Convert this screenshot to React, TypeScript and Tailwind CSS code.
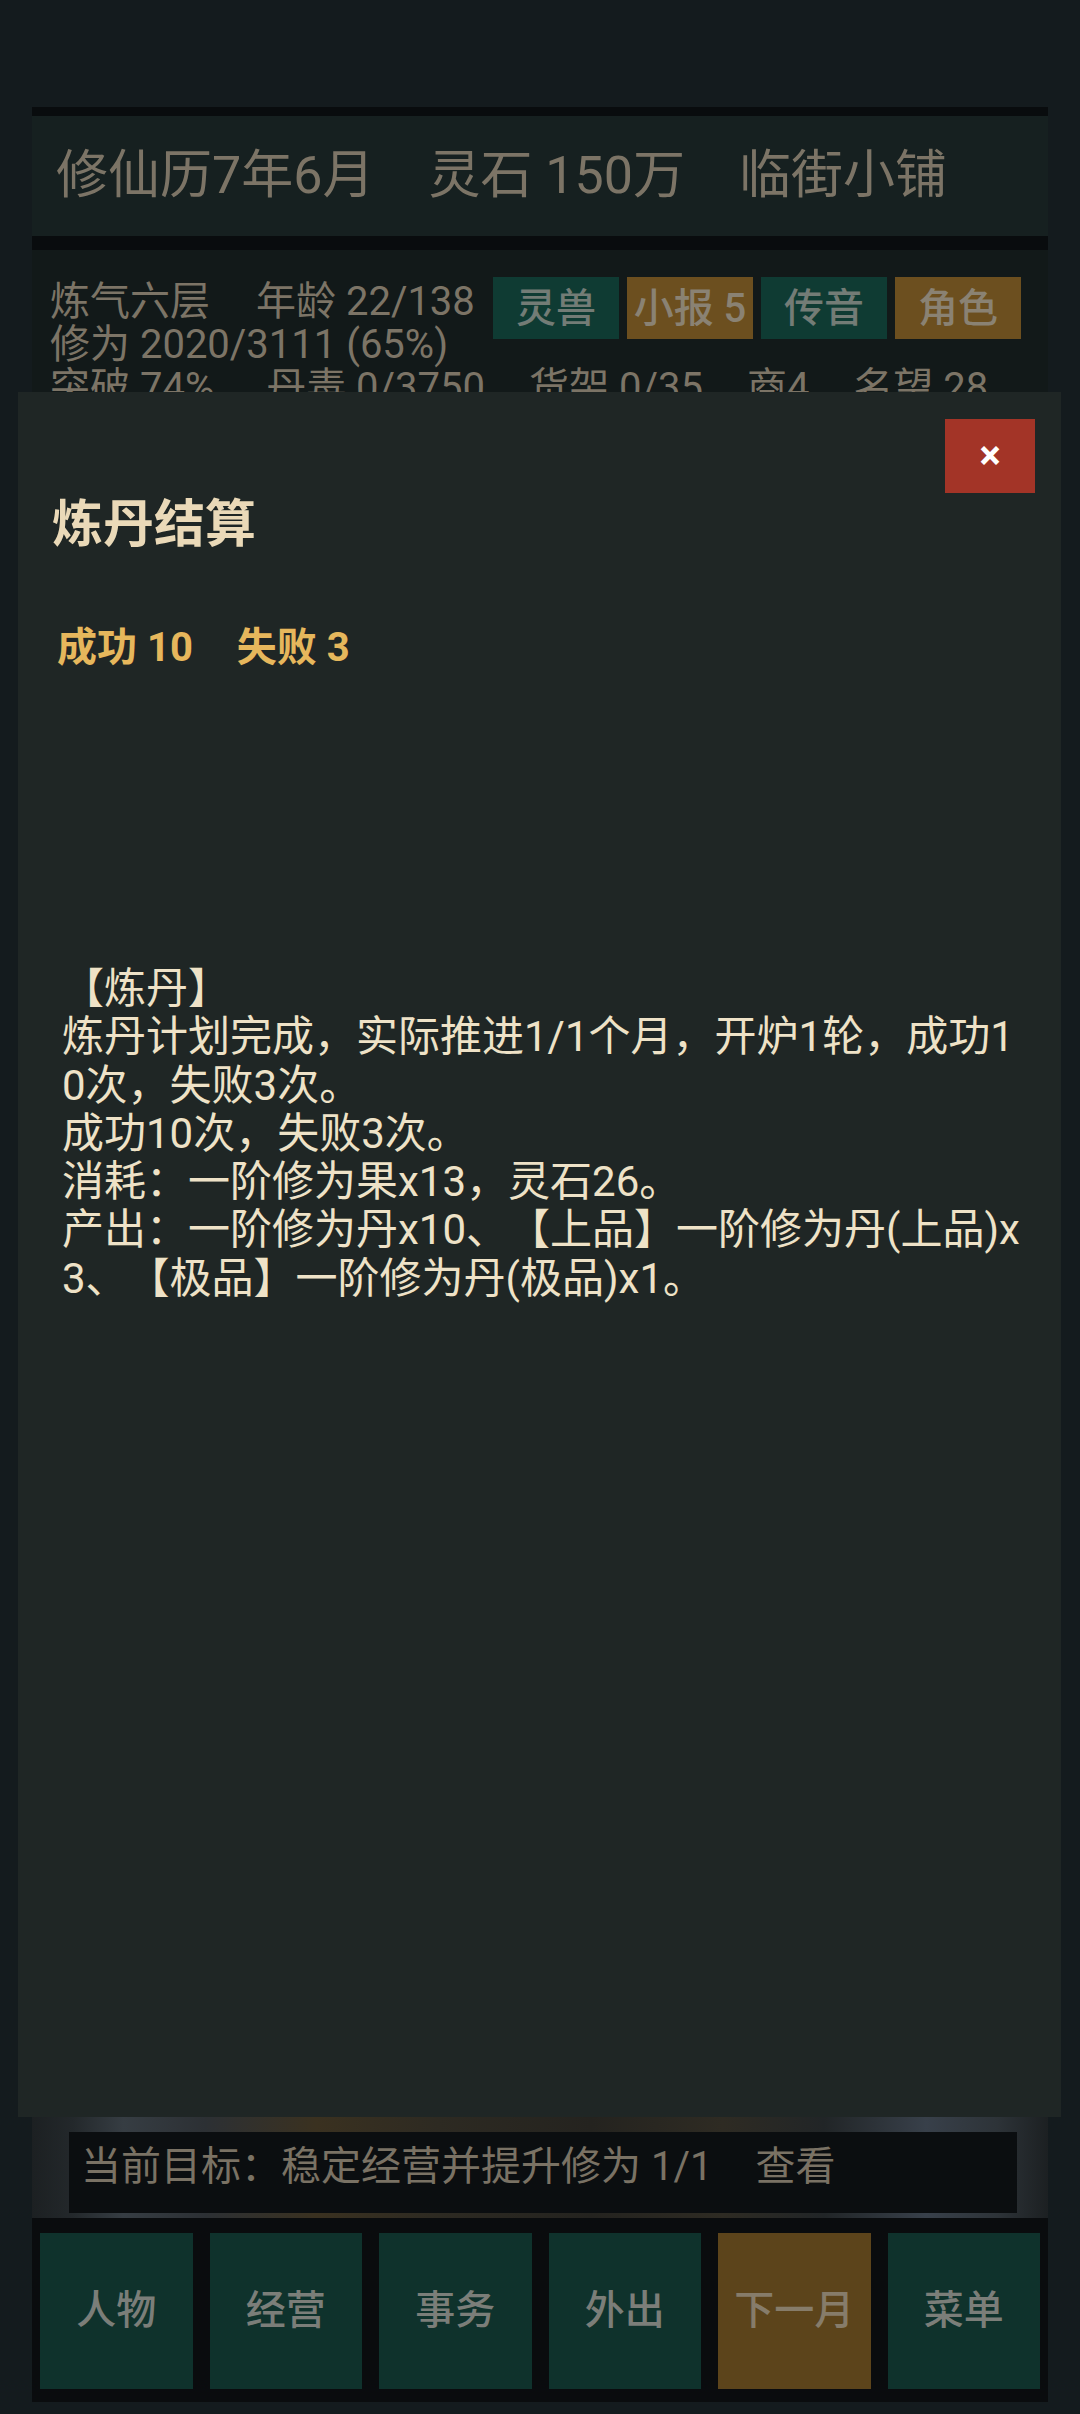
import React from 'react';

const FONT = "font-[family-name:Roboto,'Noto_Sans_CJK_SC',sans-serif]";

const TOP_BUTTONS = [
  { label: '灵兽', tone: 'green' },
  { label: '小报 5', tone: 'gold' },
  { label: '传音', tone: 'green' },
  { label: '角色', tone: 'gold' },
];

const NAV = [
  { label: '人物', tone: 'green' },
  { label: '经营', tone: 'green' },
  { label: '事务', tone: 'green' },
  { label: '外出', tone: 'green' },
  { label: '下一月', tone: 'gold' },
  { label: '菜单', tone: 'green' },
];

const REPORT = `【炼丹】
炼丹计划完成，实际推进1/1个月，开炉1轮，成功10次，失败3次。
成功10次，失败3次。
消耗：一阶修为果x13，灵石26。
产出：一阶修为丹x10、【上品】一阶修为丹(上品)x3、【极品】一阶修为丹(极品)x1。`;

export default function App() {
  return (
    <div className={`relative w-[1080px] h-[2414px] bg-[#141b1e] overflow-hidden [text-spacing-trim:space-all] ${FONT}`}>
      {/* page behind the dialog (dimmed) */}
      <div className="ml-[32px] w-[1016px] pt-[107px] h-[2402px] flex flex-col">
        <div className="h-[9px] bg-[#090c0e]" />
        <div className="h-[120px] bg-[#162020] flex items-center pl-[24px] gap-[54px] text-[52px] leading-[60px] text-[#7c7466]">
          <span>修仙历7年6月</span>
          <span>灵石 150万</span>
          <span>临街小铺</span>
        </div>
        <div className="h-[14px] bg-[#090c0e]" />

        {/* status */}
        <div className="h-[200px] bg-[#121919] pl-[18px] pr-[27px] text-[40px] leading-[43px] text-[#7c7466]">
          <div className="flex pt-[27px]">
            <div className="mt-[3px]">
              <div className="flex gap-[46px]">
                <span>炼气六层</span>
                <span>年龄 22/138</span>
              </div>
              <div>修为 2020/3111 (65%)</div>
            </div>
            <div className="ml-auto flex gap-[8px]">
              {TOP_BUTTONS.map((b) => (
                <div
                  key={b.label}
                  className={
                    b.tone === 'green'
                      ? 'w-[126px] h-[62px] flex items-center justify-center bg-[#0f3b33] text-[#737c76] font-medium'
                      : 'w-[126px] h-[62px] flex items-center justify-center bg-[#6c4f1f] text-[#8a8273] font-medium'
                  }
                >
                  {b.label}
                </div>
              ))}
            </div>
          </div>
          <div className="flex gap-[44px]">
            <span className="mr-[8px]">突破 74%</span>
            <span>丹毒 0/3750</span>
            <span>货架 0/35</span>
            <span>商4</span>
            <span>名望 28</span>
          </div>
        </div>

        {/* scene with goal bar */}
        <div className="flex-1 flex flex-col bg-[linear-gradient(90deg,#1c2022_0%,#23282b_4%,#363d43_9%,#2c3034_17%,#3a3120_28%,#2d2a22_40%,#24231f_55%,#2e2b23_68%,#212527_78%,#38404a_88%,#2d3338_95%,#1c2022_100%)]">
          <div className="mt-auto ml-[37px] mr-[31px] mb-[5px] h-[81px] bg-[#0b0e10] pl-[12px] pt-[11px] flex gap-[43px] text-[40px] leading-[48px] text-[#7a7264]">
            <span>当前目标：稳定经营并提升修为 1/1</span>
            <span>查看</span>
          </div>
        </div>

        {/* bottom nav */}
        <div className="h-[184px] bg-[#0a0c0e] px-[8px] pt-[15px] grid grid-cols-6 gap-[17px]">
          {NAV.map((n) => (
            <div
              key={n.label}
              className={
                n.tone === 'green'
                  ? 'h-[156px] flex items-center justify-center bg-[#0f322c] text-[#7b7e79] text-[40px] font-medium'
                  : 'h-[156px] flex items-center justify-center bg-[#5c441b] text-[#867c6a] text-[40px] font-medium'
              }
            >
              {n.label}
            </div>
          ))}
        </div>
      </div>

      {/* dialog */}
      <div className="absolute left-[18px] top-[392px] w-[1043px] h-[1725px] bg-[#1f2625] flex flex-col">
        <button className="self-end mt-[27px] mr-[26px] w-[90px] h-[74px] bg-[#a33427] text-white text-[40px] leading-none font-bold flex items-center justify-center">
          ×
        </button>
        <div className="mt-[2px] pl-[34px] text-[51px] leading-[60px] font-bold text-[#ead9b8]">炼丹结算</div>
        <div className="mt-[69px] pl-[39px] flex gap-[44px] text-[40px] leading-[48px] font-bold text-[#e6b75c]">
          <span>成功 10</span>
          <span>失败 3</span>
        </div>
        <div className="mt-[293px] ml-[44px] w-[966px] whitespace-pre-wrap break-all text-[42px] leading-[48.3px] text-[#eee2c7]">
          {REPORT}
        </div>
      </div>
    </div>
  );
}
